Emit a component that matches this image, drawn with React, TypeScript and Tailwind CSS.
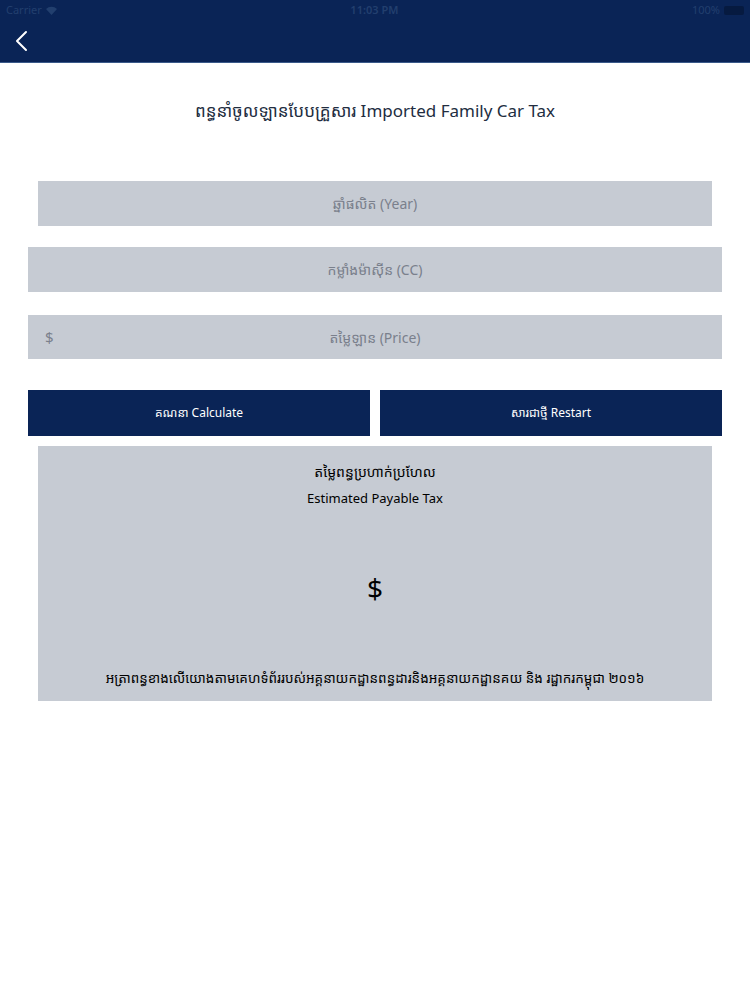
import React from 'react';

const khmer = '"Noto Sans", "Inter", "Noto Sans Khmer", "Khmer OS", sans-serif';

export default function App() {
  return (
    <div className="w-[750px] h-[1000px] bg-white overflow-hidden" style={{ fontFamily: khmer }}>
      {/* Top bar */}
      <div className="h-[63px] bg-[#0a2456] border-b border-[#3a5a8a]">
        <div className="h-[20px] flex items-center justify-between px-[6px] text-[11px] text-[#223f6e]">
          <div className="flex items-center gap-1">
            <span>Carrier</span>
            <svg width="11" height="9" viewBox="0 0 11 9" fill="#223f6e">
              <path d="M5.5 9 0 3a8 8 0 0 1 11 0z" />
            </svg>
          </div>
          <span className="font-semibold">11:03 PM</span>
          <div className="flex items-center gap-1">
            <span>100%</span>
            <div className="w-[20px] h-[9px] bg-[#061a40] rounded-[2px]" />
          </div>
        </div>
        <div className="h-[42px] flex items-center pl-[14px]">
          <svg width="14" height="22" viewBox="0 0 14 22" fill="none" stroke="white" strokeWidth="2" strokeLinecap="round" strokeLinejoin="round">
            <path d="M12 2 3 11l9 9" />
          </svg>
        </div>
      </div>

      {/* Title */}
      <h1 className="mt-[36px] text-center text-[17px] leading-6 text-[#222d3f]">
        ពន្ធនាំចូលឡានបែបគ្រួសារ Imported Family Car Tax
      </h1>

      {/* Inputs */}
      <div className="mt-[58px] flex flex-col">
        <div className="mx-[38px] h-[45px] bg-[#c6cbd3] flex items-center justify-center text-[14px] text-[#7a808c]">
          ឆ្នាំផលិត (Year)
        </div>
        <div className="mx-[28px] mt-[21px] h-[45px] bg-[#c6cbd3] flex items-center justify-center text-[14px] text-[#7a808c]">
          កម្លាំងម៉ាស៊ីន (CC)
        </div>
        <div className="mx-[28px] mt-[23px] h-[44px] bg-[#c6cbd3] relative flex items-center justify-center text-[14px] text-[#7a808c]">
          <span className="absolute left-[17px] text-[15px]">$</span>
          តម្លៃឡាន (Price)
        </div>
      </div>

      {/* Buttons */}
      <div className="mx-[28px] mt-[31px] flex gap-[10px]">
        <button className="flex-1 h-[46px] bg-[#0a2456] text-white text-[12px]">គណនា Calculate</button>
        <button className="flex-1 h-[46px] bg-[#0a2456] text-white text-[12px]">សារជាថ្មី Restart</button>
      </div>

      {/* Result */}
      <div className="mx-[38px] mt-[10px] h-[255px] bg-[#c6cbd3] flex flex-col items-center text-black">
        <div className="mt-[16px] text-[14px] leading-5">តម្លៃពន្ធប្រហាក់ប្រហែល</div>
        <div className="mt-[6px] text-[13px] leading-5">Estimated Payable Tax</div>
        <div className="mt-[64px] text-[28px] leading-8">$</div>
        <div className="mt-auto mb-[13px] text-[13.5px] leading-5">
          អត្រាពន្ធខាងលើយោងតាមគេហទំព័ររបស់អគ្គនាយកដ្ឋានពន្ធដារនិងអគ្គនាយកដ្ឋានគយ និង រដ្ឋាករកម្ពុជា ២០១៦
        </div>
      </div>
    </div>
  );
}
